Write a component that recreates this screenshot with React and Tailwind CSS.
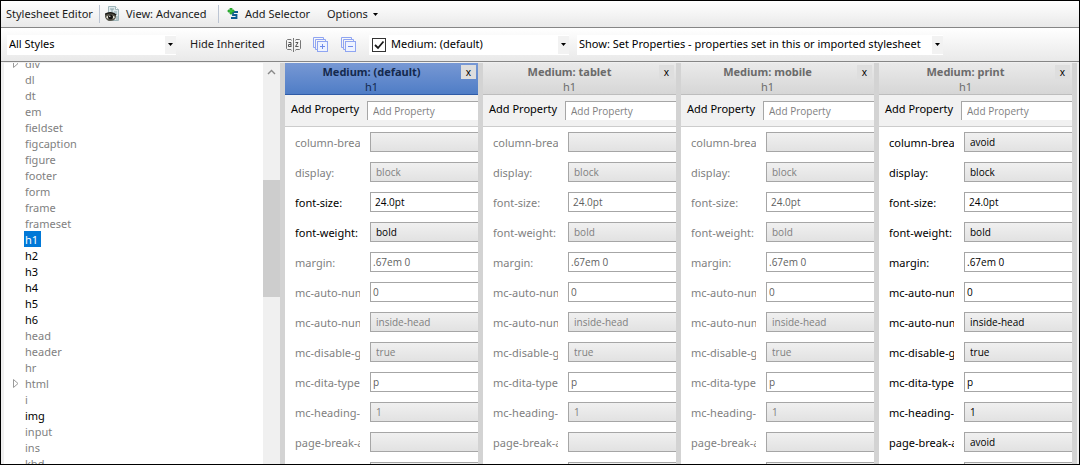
import React from "react";

const TREE = [
  { name: "div", expandable: true },
  { name: "dl" },
  { name: "dt" },
  { name: "em" },
  { name: "fieldset" },
  { name: "figcaption" },
  { name: "figure" },
  { name: "footer" },
  { name: "form" },
  { name: "frame" },
  { name: "frameset" },
  { name: "h1", selected: true },
  { name: "h2", set: true },
  { name: "h3", set: true },
  { name: "h4", set: true },
  { name: "h5", set: true },
  { name: "h6", set: true },
  { name: "head" },
  { name: "header" },
  { name: "hr" },
  { name: "html", expandable: true },
  { name: "i" },
  { name: "img", set: true },
  { name: "input" },
  { name: "ins" },
  { name: "kbd" },
];

const PROPS = [
  { label: "column-break-inside:", kind: "select", value: "", print: "avoid" },
  { label: "display:", kind: "select", value: "block" },
  { label: "font-size:", kind: "length", value: "24.0pt" },
  { label: "font-weight:", kind: "select", value: "bold" },
  { label: "margin:", kind: "text", value: ".67em 0" },
  { label: "mc-auto-number-format:", kind: "text", value: "0" },
  { label: "mc-auto-number-position:", kind: "select", value: "inside-head" },
  { label: "mc-disable-glossary-terms:", kind: "select", value: "true" },
  { label: "mc-dita-type:", kind: "text", value: "p" },
  { label: "mc-heading-level:", kind: "select", value: "1" },
  { label: "page-break-after:", kind: "select", value: "", print: "avoid" },
  { label: "page-break-inside:", kind: "select", value: "" },
];

const MEDIUMS = [
  { name: "(default)", active: true },
  { name: "tablet" },
  { name: "mobile" },
  { name: "print", allSet: true },
];

function ViewIcon() {
  return (
    <svg width="16" height="18" viewBox="0 0 16 18" aria-hidden="true">
      <path d="M3.5 1.5h7l3 3v11h-10z" fill="#dfeaec" stroke="#9fb6ba" />
      <path d="M10.5 1.5v3h3" fill="#fff" stroke="#9fb6ba" />
      <path d="M5 4h4M7 4v4M9 7h3M10 9h2M11 12h2M11 14h2" stroke="#8ba5aa" />
      <path d="M0 10c2-3 8-3.500 11 0v2c-1 3-3 4-6 4s-4-2-5-4z" fill="#57554a" />
      <path d="M0 9.500c3-2.500 8-2.500 11 .5" stroke="#1c1b16" strokeWidth="1.500" fill="none" />
      <path d="M1 12c2-2 6-2.500 9 0-2 3-7 3-9 0z" fill="#e6e3d6" />
      <circle cx="5.500" cy="12" r="2.500" fill="#15140f" />
      <circle cx="4.800" cy="11.300" r=".7" fill="#fff" />
    </svg>
  );
}

function AddSelectorIcon() {
  return (
    <svg width="13" height="12" viewBox="0 0 13 12" aria-hidden="true">
      <path d="M11 4H6v3h3.500v3H4" fill="none" stroke="#0d5c91" strokeWidth="1.800" />
      <path d="M3 0h2v2h2v2H5v2H3V4H1V2h2z" fill="#3ac23a" stroke="#1f9a2a" strokeWidth=".7" />
    </svg>
  );
}

function SortIcon() {
  return (
    <svg width="15" height="14" viewBox="0 0 15 14" aria-hidden="true">
      <path d="M5.500 2.500l-.5-1H1.500l-1 1v8l1 1H5l.5 1M9.500 2.500l.5-1h3.500l1 1v8l-1 1H10l-.5 1" fill="none" stroke="#777" />
      <path d="M7.500 0v14" stroke="#777" />
      <path d="M2.500 4.500h2.500v4.500M5 6.500H2.500v2H5" fill="none" stroke="#555" />
      <path d="M9.500 4.500H12L9.500 8.500h3" fill="none" stroke="#555" />
    </svg>
  );
}

function StackIcon({ plus }) {
  return (
    <svg width="16" height="16" viewBox="0 0 16 16" aria-hidden="true">
      <path d="M2.500 10.500h-2v-10h10v2" fill="none" stroke="#8fa5f2" />
      <path d="M4.500 12.500h-2v-10h10v2" fill="none" stroke="#8fa5f2" />
      <rect x="4.500" y="4.500" width="10" height="10" fill="#eef3ff" stroke="#8fa5f2" />
      <path d={plus ? "M7 9.500h5M9.500 7v5" : "M7 9.500h5"} stroke="#6f8bea" />
    </svg>
  );
}

function Caret() {
  return (
    <svg width="5" height="3" viewBox="0 0 5 3" aria-hidden="true" className="shrink-0">
      <path d="M0 0h5L2.500 3z" fill="#000" />
    </svg>
  );
}

function Combo({ label, value, className, children }) {
  return (
    <div className={"flex h-5 items-center bg-white " + className}>
      {children}
      <div className="grid h-full min-w-0 flex-1 items-center">
        <select
          aria-label={label}
          className="col-start-1 row-start-1 h-full w-full appearance-none bg-transparent pl-[2px] pr-3 text-black outline-none"
        >
          <option>{value}</option>
        </select>
        <span className="pointer-events-none col-start-1 row-start-1 flex h-[18px] w-[11px] items-center justify-center justify-self-end bg-[#f2f2f2]">
          <Caret />
        </span>
      </div>
    </div>
  );
}

function Toolbar() {
  const item = "flex h-full items-center";
  return (
    <header className="flex h-[27px] items-center border-b border-[#868686] bg-linear-to-b from-white to-[#e9e9e9] pl-[5px]">
      <h1 className="w-[93px] whitespace-nowrap">Stylesheet Editor</h1>
      <div className="flex h-[18px] items-center border-l border-[#bcc5d3] pl-[5px]">
        <button type="button" className={item + " w-[113px] gap-[5px] whitespace-nowrap"}>
          <ViewIcon />
          View: Advanced
        </button>
      </div>
      <div className="flex h-[18px] items-center border-l border-[#bcc5d3] pl-2">
        <button type="button" className={item + " w-[100px] gap-[5px] whitespace-nowrap"}>
          <AddSelectorIcon />
          Add Selector
        </button>
        <button type="button" className={item + " gap-[5px] whitespace-nowrap"}>
          Options
          <Caret />
        </button>
      </div>
    </header>
  );
}

function FilterBar() {
  return (
    <div className="flex h-[34px] items-center border-b border-[#868686] bg-linear-to-b from-white to-[#e9e9e9] pl-[6px]">
      <Combo label="Styles" value="All Styles" className="w-[169px]" />
      <button type="button" className="ml-[14px] w-[96px] whitespace-nowrap text-left">
        Hide Inherited
      </button>
      <div className="flex items-center gap-3">
        <button type="button" aria-label="Sort">
          <SortIcon />
        </button>
        <button type="button" aria-label="Expand all">
          <StackIcon plus />
        </button>
        <button type="button" aria-label="Collapse all">
          <StackIcon />
        </button>
      </div>
      <Combo label="Medium" value="Medium: (default)" className="ml-3 w-[200px] pl-[3px]">
        <span className="mr-[3px] grid size-[14px] shrink-0">
          <input
            type="checkbox"
            defaultChecked
            aria-label="Show medium"
            className="col-start-1 row-start-1 size-[14px] appearance-none border border-[#333] bg-white"
          />
          <svg viewBox="0 0 14 14" className="pointer-events-none col-start-1 row-start-1 size-[14px]" aria-hidden="true">
            <path d="M3 7l3 3 5.500-6.500" fill="none" stroke="#1a1a1a" strokeWidth="1.800" />
          </svg>
        </span>
      </Combo>
      <Combo
        label="Show"
        value="Show: Set Properties - properties set in this or imported stylesheet"
        className="ml-2 w-[366px]"
      />
    </div>
  );
}

function StyleTree() {
  return (
    <nav className="flex w-[276px] shrink-0 bg-white">
      <ul className="-mt-2 flex-1">
        {TREE.map((n) => (
          <li key={n.name} className="flex h-4 items-center">
            <span className="flex w-5 justify-end pr-[5px]">
              {n.expandable && (
                <svg width="6" height="9" viewBox="0 0 6 9" aria-hidden="true">
                  <path d="M.5 .5v8l4.500-4z" fill="none" stroke="#9a9a9a" />
                </svg>
              )}
            </span>
            <button
              type="button"
              className={
                "h-4 pl-px pr-[3px] pt-[2px] leading-[14px] " +
                (n.selected ? "bg-[#0078d7] text-white" : n.set ? "text-black" : "text-[#7f7f7f]")
              }
            >
              {n.name}
            </button>
          </li>
        ))}
      </ul>
      <div className="flex w-[17px] flex-col items-center bg-[#f0f0f0]">
        <svg width="9" height="6" viewBox="0 0 9 6" className="mt-[6px] shrink-0" aria-hidden="true">
          <path d="M1 5l3.500-3.500L8 5" fill="none" stroke="#888" strokeWidth="1.400" />
        </svg>
        <span className="mt-[105px] h-[117px] w-full shrink-0 bg-[#cdcdcd]" />
      </div>
    </nav>
  );
}

function Property({ prop, medium }) {
  const id = medium.name + "-" + prop.label;
  const value = medium.allSet && prop.print ? prop.print : prop.value;
  const lit = medium.allSet || (medium.active && prop.label.startsWith("font-"));
  const tone = lit ? "text-black" : "text-[#7f7f7f]";
  const box =
    "h-5 w-full min-w-0 appearance-none border border-r-0 border-[#a6a6a6] font-['Open_Sans','Noto_Sans',sans-serif] text-[10px] outline-none ";
  return (
    <div className="flex h-[30px] items-center">
      <label htmlFor={id} className={"mr-[10px] w-[65px] shrink-0 overflow-hidden whitespace-nowrap pt-[2px] " + tone}>
        {prop.label}
      </label>
      {prop.kind === "select" ? (
        <select id={id} className={box + "bg-linear-to-b from-[#f0f0f0] to-[#e2e2e2] pl-[5px] " + tone}>
          <option>{value}</option>
        </select>
      ) : (
        <input
          id={id}
          defaultValue={value}
          className={box + "bg-white " + (prop.kind === "length" ? "pl-1 " : "pl-[2px] ") + (lit ? "text-black" : "text-[#5f5f5f]")}
        />
      )}
    </div>
  );
}

function MediumPanel({ medium }) {
  return (
    <section className="min-w-0 flex-1 border-r-[5px] border-[#d3d3d3] bg-white">
      <div
        className={
          "grid h-8 border-b " +
          (medium.active
            ? "border-[#2f5ba6] bg-linear-to-b from-[#7798d4] to-[#4f7dc6] text-[#14294d]"
            : "border-[#bdbdbd] bg-linear-to-b from-[#eaeaea] to-[#d6d6d6] text-[#6b6b6b]")
        }
      >
        <div className="col-start-1 row-start-1 pr-5 text-center">
          <h2 className="font-bold leading-[18px]">Medium: {medium.name}</h2>
          <p className="leading-3">h1</p>
        </div>
        <button
          type="button"
          aria-label="Close"
          className="col-start-1 row-start-1 mr-[2px] mt-[2px] flex h-[14px] w-[15px] items-center justify-center justify-self-end bg-[#dedede] text-[10px] leading-none text-black"
        >
          x
        </button>
      </div>
      <div className="flex h-8 items-center border-b border-[#cccccc] bg-[#f1f1f1] pl-[6px]">
        <label htmlFor={"add-" + medium.name} className="w-[76px] shrink-0 whitespace-nowrap pb-[3px] text-black">
          Add Property
        </label>
        <input
          id={"add-" + medium.name}
          placeholder="Add Property"
          className="h-[19px] w-full min-w-0 border border-b-0 border-r-0 border-[#a6a6a6] bg-white pl-[5px] font-['Open_Sans','Noto_Sans',sans-serif] text-[10px] outline-none placeholder:text-[#7f7f7f]"
        />
      </div>
      <div className="pl-[10px]">
        {PROPS.map((p) => (
          <Property key={p.label} prop={p} medium={medium} />
        ))}
      </div>
    </section>
  );
}

export default function App() {
  return (
    <div className="flex h-screen flex-col overflow-hidden border border-black bg-[#f0f0f0] font-['Noto_Sans','Open_Sans',sans-serif] text-[11px] text-[#1a1a1a]">
      <Toolbar />
      <FilterBar />
      <main className="mt-px flex min-h-0 flex-1 overflow-hidden pl-[3px] pr-[2px]">
        <StyleTree />
        <div className="flex min-w-0 flex-1 border-l-[5px] border-[#d3d3d3]">
          {MEDIUMS.map((m) => (
            <MediumPanel key={m.name} medium={m} />
          ))}
        </div>
      </main>
    </div>
  );
}
